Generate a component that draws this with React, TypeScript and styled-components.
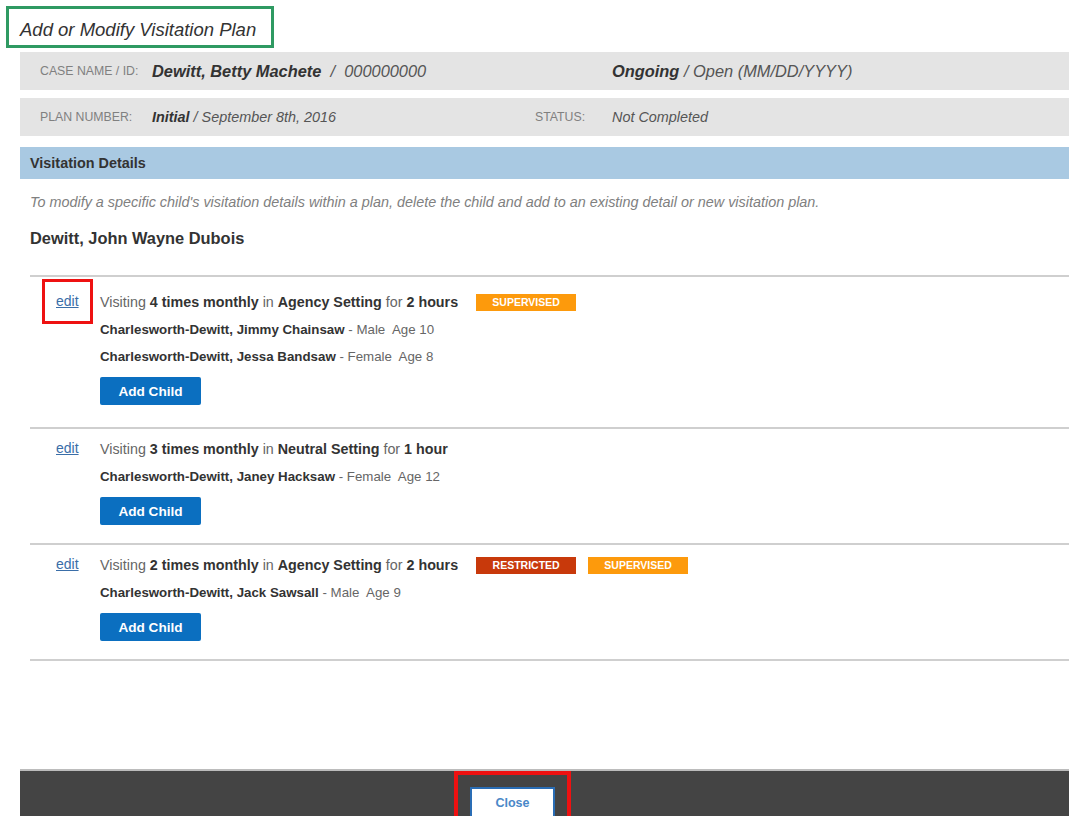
import React from "react";
import styled, { createGlobalStyle, css } from "styled-components";

const GlobalStyle = createGlobalStyle`
  html, body {
    margin: 0;
    padding: 0;
    background: #ffffff;
    overflow: hidden;
  }
  body {
    font-family: "Liberation Sans", Arial, sans-serif;
    color: #333333;
  }
`;

type Tag = "supervised" | "restricted";

interface Child {
  name: string;
  gender: string;
  age: number;
}

interface Detail {
  times: number;
  setting: string;
  duration: string;
  tags: Tag[];
  children: Child[];
  highlighted?: boolean;
}

const details: Detail[] = [
  {
    times: 4,
    setting: "Agency Setting",
    duration: "2 hours",
    tags: ["supervised"],
    highlighted: true,
    children: [
      { name: "Charlesworth-Dewitt, Jimmy Chainsaw", gender: "Male", age: 10 },
      { name: "Charlesworth-Dewitt, Jessa Bandsaw", gender: "Female", age: 8 },
    ],
  },
  {
    times: 3,
    setting: "Neutral Setting",
    duration: "1 hour",
    tags: [],
    children: [
      { name: "Charlesworth-Dewitt, Janey Hacksaw", gender: "Female", age: 12 },
    ],
  },
  {
    times: 2,
    setting: "Agency Setting",
    duration: "2 hours",
    tags: ["restricted", "supervised"],
    children: [
      { name: "Charlesworth-Dewitt, Jack Sawsall", gender: "Male", age: 9 },
    ],
  },
];

export default function App(): JSX.Element {
  return (
    <Page>
      <GlobalStyle />
      <Main>
        <TitleBox>Add or Modify Visitation Plan</TitleBox>

        <Body>
          <InfoRow>
            <InfoLabel>Case Name / ID:</InfoLabel>
            <InfoValue $large>
              <strong>Dewitt, Betty Machete</strong>&nbsp; / &nbsp;000000000
            </InfoValue>
            <span />
            <InfoValue $large>
              <strong>Ongoing</strong> / Open (MM/DD/YYYY)
            </InfoValue>
          </InfoRow>

          <InfoRow>
            <InfoLabel>Plan Number:</InfoLabel>
            <InfoValue>
              <strong>Initial</strong> / September 8th, 2016
            </InfoValue>
            <InfoLabel>Status:</InfoLabel>
            <InfoValue>Not Completed</InfoValue>
          </InfoRow>

          <SectionBar>Visitation Details</SectionBar>

          <Section>
            <HelpText>
              To modify a specific child&apos;s visitation details within a
              plan, delete the child and add to an existing detail or new
              visitation plan.
            </HelpText>
            <ParentName>Dewitt, John Wayne Dubois</ParentName>

            <DetailList>
              {details.map((d, i) => (
                <DetailItem key={i}>
                  <EditCell>
                    <EditLink href="#" $highlighted={d.highlighted}>
                      edit
                    </EditLink>
                  </EditCell>
                  <DetailBody>
                    <Summary>
                      <span>
                        Visiting <b>{d.times} times monthly</b> in{" "}
                        <b>{d.setting}</b> for <b>{d.duration}</b>
                      </span>
                      {d.tags.map((t) => (
                        <Badge key={t} $tone={t}>
                          {t}
                        </Badge>
                      ))}
                    </Summary>
                    {d.children.map((c) => (
                      <ChildLine key={c.name}>
                        <b>{c.name}</b> - {c.gender}&nbsp; Age {c.age}
                      </ChildLine>
                    ))}
                    <AddChildButton type="button">Add Child</AddChildButton>
                  </DetailBody>
                </DetailItem>
              ))}
            </DetailList>
          </Section>
        </Body>
      </Main>

      <Footer>
        <CloseButton type="button">Close</CloseButton>
      </Footer>
    </Page>
  );
}

const Page = styled.div`
  height: 816px;
  display: flex;
  flex-direction: column;
`;

const Main = styled.div`
  flex: 1;
  padding: 6px 0 0 6px;
`;

const TitleBox = styled.h1`
  display: inline-block;
  margin: 0;
  box-sizing: border-box;
  width: 268px;
  height: 42px;
  padding: 5px 0 0 11px;
  border: 3px solid #2f9a62;
  font-size: 18.5px;
  line-height: 31px;
  font-weight: normal;
  font-style: italic;
  color: #333333;
  white-space: nowrap;
`;

const Body = styled.div`
  margin: 4px 0 0 14px;
  display: flex;
  flex-direction: column;
  gap: 8px;
`;

const InfoRow = styled.div`
  display: grid;
  grid-template-columns: 112px 383px 77px 1fr;
  align-items: center;
  height: 38px;
  padding-left: 20px;
  background: #e4e4e4;
`;

const InfoLabel = styled.span`
  font-size: 12.3px;
  text-transform: uppercase;
  color: #808080;
`;

const InfoValue = styled.span<{ $large?: boolean }>`
  font-style: italic;
  color: #555555;
  font-size: ${({ $large }) => ($large ? "16.4px" : "14.4px")};

  strong {
    color: #333333;
  }
`;

const SectionBar = styled.div`
  margin-top: 3px;
  height: 32px;
  line-height: 32px;
  padding-left: 10px;
  background: #a9c9e2;
  font-size: 14.4px;
  font-weight: bold;
  color: #333333;
`;

const Section = styled.div`
  padding-left: 10px;
`;

const HelpText = styled.p`
  margin: 7px 0 0;
  font-size: 14.4px;
  font-style: italic;
  color: #808080;
`;

const ParentName = styled.h2`
  margin: 19px 0 0;
  font-size: 16.4px;
  font-weight: bold;
  color: #333333;
`;

const DetailList = styled.div`
  margin-top: 27px;
  border-bottom: 2px solid #cfcfcf;
`;

const DetailItem = styled.div`
  display: grid;
  grid-template-columns: 70px 1fr;
  padding: 9px 0 18px;
  border-top: 2px solid #cfcfcf;

  &:first-child {
    padding: 14px 0 22px;
  }
`;

const EditCell = styled.div`
  padding-left: 26px;
`;

const EditLink = styled.a<{ $highlighted?: boolean }>`
  display: inline-block;
  font-size: 14px;
  line-height: 17px;
  margin-top: 2px;
  color: #3a6ea8;
  text-decoration: underline;

  ${({ $highlighted }) =>
    $highlighted &&
    css`
      outline: 3px solid #ee1111;
      outline-offset: 11px;
    `}
`;

const DetailBody = styled.div`
  display: flex;
  flex-direction: column;
  align-items: flex-start;
  color: #666666;

  b {
    color: #333333;
  }
`;

const Summary = styled.div`
  display: flex;
  align-items: center;
  gap: 18px;
  height: 22px;
  font-size: 14.3px;
`;

const tones = {
  supervised: "#fd9a0c",
  restricted: "#c8390b",
};

const Badge = styled.span<{ $tone: Tag }>`
  display: inline-block;
  width: 100px;
  height: 17px;
  line-height: 17px;
  text-align: center;
  font-size: 10.5px;
  font-weight: bold;
  text-transform: uppercase;
  color: #ffffff;
  background: ${({ $tone }) => tones[$tone]};

  & + & {
    margin-left: -6px;
  }
`;

const ChildLine = styled.div`
  margin-top: 7px;
  line-height: 20px;
  font-size: 13.3px;
`;

const AddChildButton = styled.button`
  margin-top: 10px;
  width: 101px;
  height: 28px;
  border: none;
  border-radius: 2px;
  background: #0b6fc0;
  color: #ffffff;
  font-family: inherit;
  font-size: 13.6px;
  font-weight: bold;
  cursor: pointer;
`;

const Footer = styled.div`
  margin-left: 20px;
  height: 47px;
  box-sizing: border-box;
  border-top: 2px solid #bcbcbc;
  background: #444444;
  display: flex;
  justify-content: center;
  padding: 16px 64px 0 0;
`;

const CloseButton = styled.button`
  width: 85px;
  height: 32px;
  background: #ffffff;
  border: 2px solid #2a6db5;
  color: #4a88c8;
  font-family: inherit;
  font-size: 12.5px;
  font-weight: bold;
  outline: 4px solid #ee1111;
  outline-offset: 12px;
  cursor: pointer;
`;
